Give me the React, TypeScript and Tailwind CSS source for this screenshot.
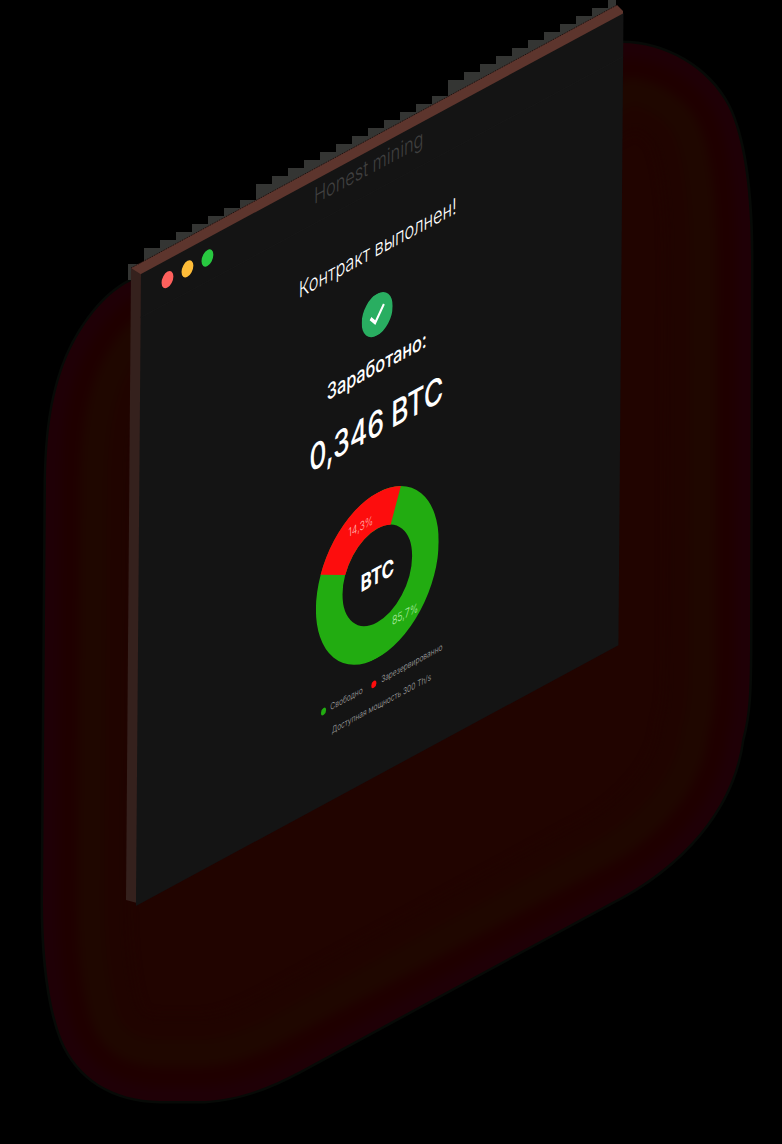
import React from "react";

const GLOW =
  "M131 281C100 296 74 335 62 370C52 400 47 430 46 480L43 900C43 960 50 1010 62 1040C78 1078 112 1100 160 1101L205 1101C240 1099 270 1087 300 1071L610 903C680 868 733 810 742 740C749 715 750 690 750 640L751 260C751 200 745 140 728 106C708 68 665 43 622 43Z";

/* Stair-step fringe along the upper rim: 16px columns on an 8px grid. */
const fringe = Array.from({ length: 31 }, (_, i) => {
  const x = 128 + i * 16;
  const top = Math.max(0, Math.floor((268 - (x + 16 - 131) * 0.541) / 8) * 8);
  return { x, top: i === 0 ? 264 : top, width: i === 30 ? 8 : 16 };
});

function Backdrop() {
  return (
    <svg viewBox="0 0 782 1144" className="absolute left-0 top-0 w-full" aria-hidden="true">
      <defs>
        <clipPath id="glow">
          <path d={GLOW} />
        </clipPath>
        <filter id="soft" x="-10%" y="-10%" width="120%" height="120%" colorInterpolationFilters="sRGB">
          <feGaussianBlur stdDeviation="5" />
        </filter>
      </defs>
      <path d={GLOW} fill="#210400" stroke="#070a07" strokeWidth="5" />
      <g clipPath="url(#glow)" fill="none">
        <g filter="url(#soft)">
          <path d={GLOW} stroke="#200400" strokeWidth="170" />
          <path d={GLOW} stroke="#1f0700" strokeWidth="122" />
          <path d={GLOW} stroke="#1f0000" strokeWidth="68" />
          <path d={GLOW} stroke="#1f0006" strokeWidth="30" />
        </g>
      </g>
      {fringe.map((f) => (
        <rect key={f.x} x={f.x} y={f.top} width={f.width} height="16" fill="#343533" />
      ))}
      <path d="M131 268L617 5L623 11L623 16L141 278Z" fill="#5d352d" />
      <path d="M131 268L617 5" stroke="#1a0c0a" strokeDasharray="1 1" />
      <path d="M131 268L142 275L137 903L126 900Z" fill="#35211d" />
    </svg>
  );
}

function Donut() {
  return (
    <svg
      viewBox="-83 -83 166 166"
      className="mt-[50px] size-[166px]"
      role="img"
      aria-label="BTC"
      fontFamily='Inter, "Liberation Sans", sans-serif'
      textAnchor="middle"
    >
      <circle r="65" fill="none" stroke="#22ac11" strokeWidth="36" />
      <path d="M-77 -31.5A83 83 0 0 1 31 -77L17.5 -43.7A47 47 0 0 0 -43.5 -17.8Z" fill="#fd0d0d" />
      <text y="8" fontSize="23" fontWeight="700" fill="#ffffff">BTC</text>
      <text x="-23" y="-54" fontSize="12" fontWeight="300" fill="#ffb9b4">14,3%</text>
      <text x="38" y="58" fontSize="12" fontWeight="300" fill="#b5ecaa">85,7%</text>
    </svg>
  );
}

export default function App() {
  return (
    <div className="min-h-screen overflow-hidden bg-black">
      <main className="relative overflow-hidden pb-60 pl-[141px] pt-[274px] font-['Inter','Liberation_Sans',sans-serif]">
        <Backdrop />
        <div className="-mr-12">
          <section className="relative w-[652px] origin-top-left bg-[#141414] pb-[62px] [transform:matrix(0.74,-0.4,-0.008,1,0,0)]">
            <header className="grid h-11 grid-cols-[1fr_auto_1fr] items-start border-b border-[#171717] pl-7 pr-16 pt-1.5">
              <div className="mt-1.5 flex gap-[11px]">
                <span className="size-4 rounded-full bg-[#fd605c]" />
                <span className="size-4 rounded-full bg-[#febc38]" />
                <span className="size-4 rounded-full bg-[#28c840]" />
              </div>
              <p className="text-[22px] font-light leading-5 text-[#404040]">Honest mining</p>
            </header>
            <div className="flex flex-col items-center pt-11 text-white">
              <div className="flex flex-col items-center pr-2.5">
                <h1 className="text-[22px] font-light leading-7">Контракт выполнен!</h1>
                <svg viewBox="0 0 42 42" className="mt-8 size-[42px]" aria-hidden="true">
                  <circle cx="21" cy="21" r="21" fill="#29ae61" />
                  <path d="M12 21.5L18.5 28L30 14" fill="none" stroke="#fff" strokeWidth="3.2" />
                </svg>
                <p className="mt-4 text-[22px] font-medium leading-7">Заработано:</p>
                <p className="mt-6 text-[36px] font-medium leading-10">0,346 BTC</p>
              </div>
              <div className="pr-1">
                <Donut />
              </div>
              <div className="flex flex-col items-center pl-2.5 text-[9px] font-light leading-4 text-[#a8a8a8]">
                <ul className="mt-4 flex gap-3">
                  <li className="flex items-center gap-1.5">
                    <span className="size-[7px] rounded-full bg-[#22ac11]" />
                    Свободно
                  </li>
                  <li className="flex items-center gap-1.5">
                    <span className="size-[7px] rounded-full bg-[#fd0d0d]" />
                    Зарезервированно
                  </li>
                </ul>
                <p className="mt-2">Доступная мощность 300 Th/s</p>
              </div>
            </div>
          </section>
        </div>
      </main>
    </div>
  );
}
